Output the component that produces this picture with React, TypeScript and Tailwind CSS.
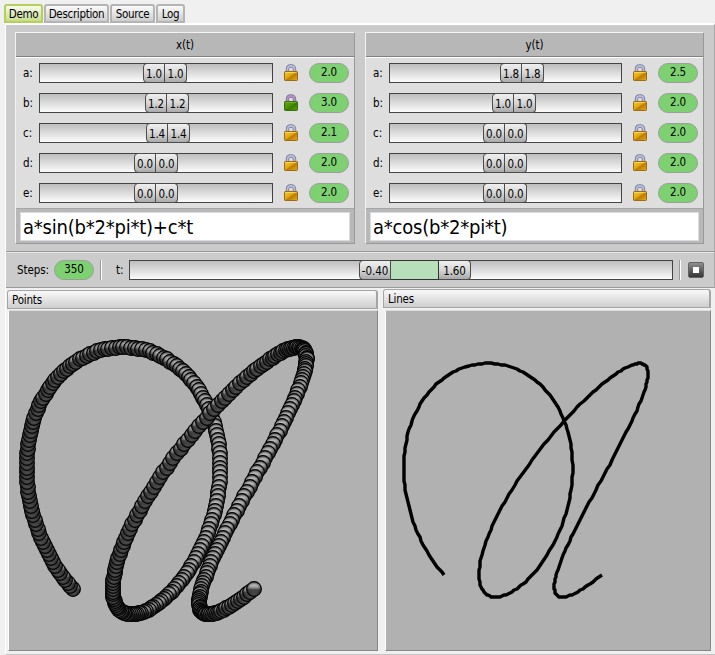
import React from "react";

type Row = { name: string; value: string; offset: number; power: string; open?: boolean };

const xRows: Row[] = [
  { name: "a:", value: "1.0", offset: 103, power: "2.0" },
  { name: "b:", value: "1.2", offset: 105, power: "3.0", open: true },
  { name: "c:", value: "1.4", offset: 106, power: "2.1" },
  { name: "d:", value: "0.0", offset: 94, power: "2.0" },
  { name: "e:", value: "0.0", offset: 94, power: "2.0" },
];

const yRows: Row[] = [
  { name: "a:", value: "1.8", offset: 110, power: "2.5" },
  { name: "b:", value: "1.0", offset: 102, power: "2.0" },
  { name: "c:", value: "0.0", offset: 93, power: "2.0" },
  { name: "d:", value: "0.0", offset: 93, power: "2.0" },
  { name: "e:", value: "0.0", offset: 93, power: "2.0" },
];

const STEPS = 350;

function curve(cx: number, cy: number, sx: number, sy: number) {
  return Array.from({ length: STEPS + 1 }, (_, i) => {
    const t = -0.4 + (2 * i) / STEPS;
    const x = Math.sin(1.2 * 2 * Math.PI * t) + 1.4 * t;
    const y = 1.8 * Math.cos(2 * Math.PI * t);
    return [cx + x * sx, cy - y * sy] as const;
  });
}

function Lock({ open }: { open?: boolean }) {
  const id = open ? "green" : "gold";
  return (
    <svg width="14" height="18" viewBox="0 0 14 18" className="block shrink-0">
      <defs>
        <linearGradient id={id} x1="0" y1="0" x2="1" y2="1">
          <stop offset="0" stopColor={open ? "#62a514" : "#f3cd3e"} />
          <stop offset="0.45" stopColor={open ? "#4a9206" : "#dfa70c"} />
          <stop offset="0.55" stopColor={open ? "#3a7b03" : "#bc7b05"} />
          <stop offset="1" stopColor={open ? "#58a30c" : "#eaae10"} />
        </linearGradient>
      </defs>
      <path d="M3.5 9V5C3.5 3 4.8 2 7 2s3.5 1 3.5 3V9" fill="none" stroke="#747491" strokeWidth="3.4" />
      <path d="M3.5 9V5C3.5 3 4.8 2 7 2s3.5 1 3.5 3V9" fill="none" stroke={open ? "#b590cf" : "#b9bdde"} strokeWidth="1.8" />
      <rect x="0.5" y="7.5" width="13" height="9" rx="0.7" fill={`url(#${id})`} stroke={open ? "#35700b" : "#9b6b18"} />
      <path d="M1.5 8.5h11" stroke={open ? "#80bd37" : "#ffe06e"} opacity=".7" />
    </svg>
  );
}

function Chip({ children }: { children: React.ReactNode }) {
  return (
    <div className="flex h-5 w-10 shrink-0 items-center justify-center rounded-full border border-[#9a9f9a] bg-[#7dd171] text-[11.5px] leading-none tracking-[-0.1px]">
      <span>{children}</span>
    </div>
  );
}

function Handle({ children, side, wide }: { children: React.ReactNode; side: "left" | "right"; wide?: boolean }) {
  return (
    <div
      className={`flex h-5 shrink-0 items-center justify-center border-[#4c4c4c] bg-linear-to-b from-[#efefef] via-[#d6d6d6] to-[#aaaaaa] text-[11.5px] leading-none tracking-[-0.1px] ${
        side === "left" ? "rounded-l-[4px] border" : "rounded-r-[4px] border border-l-0"
      } ${wide ? "w-[32px]" : "w-[22px]"}`}
    >
      <span className="translate-y-[2px]">{children}</span>
    </div>
  );
}

function Track({ children, className }: { children: React.ReactNode; className: string }) {
  return (
    <div className={`flex h-5 shrink-0 bg-linear-to-b from-[#bababa] to-white shadow-[inset_0_0_0_1px_#444] ${className}`}>
      {children}
    </div>
  );
}

function Column({ title, rows, formula, width, track }: { title: string; rows: Row[]; formula: string; width: string; track: string }) {
  return (
    <section className={`h-[212px] border border-t-[#f3f3f3] border-r-[#999] border-b-[#999] border-l-[#f3f3f3] bg-[#dedede] ${width}`}>
      <h2 className="flex h-6 items-center justify-center border-b border-[#808080] bg-[#b7b7b7] pt-[2px] text-[11.5px] leading-none">{title}</h2>
      <div className="h-[151px] border-t border-white pt-[5px]">
        {rows.map((row) => (
          <div key={row.name} className="flex h-[30px] items-start">
            <span className="w-[23px] shrink-0 pl-[7px] text-[11.5px] leading-[21px]">{row.name}</span>
            <Track className={track}>
              <div className="shrink-0" style={{ width: row.offset + 1 }} />
              <Handle side="left">{row.value}</Handle>
              <Handle side="right">{row.value}</Handle>
            </Track>
            <div className="ml-[11px] mt-px"><Lock open={row.open} /></div>
            <div className="ml-[11px]"><Chip>{row.power}</Chip></div>
          </div>
        ))}
      </div>
      <div className="h-[35px] border-t border-[#a6a6a6] bg-[#b8b8b8] pl-1 pr-1 pt-[3px]">
        <div className="flex h-[29px] items-center border border-[#d8dce0] bg-white pl-[2px] text-[20px] leading-none tracking-[-0.22px]">
          {formula}
        </div>
      </div>
    </section>
  );
}

function Tab({ children, className, active }: { children: string; className: string; active?: boolean }) {
  return (
    <div
      className={`flex h-[19px] items-center justify-center rounded-t-[3px] border-2 pt-[3px] text-[11.5px] leading-none tracking-[-0.3px] ${
        active
          ? "border-[#b5cf5b] bg-linear-to-b from-[#f7faed] to-[#c8dc8d]"
          : "border-[#b4b4b4] bg-linear-to-b from-[#fafafa] to-[#cecece]"
      } ${className}`}
    >
      {children}
    </div>
  );
}

function PlotHeader({ children, className }: { children: string; className: string }) {
  return (
    <h3 className={`flex items-center rounded-t-[3px] border border-[#a5a5a5] border-r-2 bg-linear-to-b from-[#f9f9f9] to-[#cecece] pl-1 pt-[3px] text-[11.5px] leading-none tracking-[-0.2px] ${className}`}>
      {children}
    </h3>
  );
}

export default function App() {
  const balls = curve(123.4, 480.8, 74, 74.2);
  const line = curve(488.2, 480.2, 64.5, 64.9);
  return (
    <main className="h-[655px] w-[715px] overflow-hidden bg-[#f0f0f0] font-['DejaVu_Sans_Condensed','DejaVu_Sans',sans-serif] text-black [font-stretch:condensed]">
      <nav className="flex h-[23px] pl-1 pt-1">
        <Tab active className="w-[39px]">Demo</Tab>
        <Tab className="ml-px w-[65px]">Description</Tab>
        <Tab className="ml-px w-[45px]">Source</Tab>
        <Tab className="ml-px w-[29px]">Log</Tab>
      </nav>
      <div className="ml-[5px] h-[632px] border-b border-l border-[#fff] border-b-[#c4c4c4]">
        <div className="h-[265px] border-t-2 border-r border-t-white border-r-[#aaa] bg-[#cbcbcb]">
          <div className="flex h-[226px] pl-[9px] pt-[7px]">
            <Column title="x(t)" rows={xRows} formula="a*sin(b*2*pi*t)+c*t" width="w-[340px]" track="w-[234px]" />
            <div className="w-[10px]" />
            <Column title="y(t)" rows={yRows} formula="a*cos(b*2*pi*t)" width="w-[339px]" track="w-[233px]" />
          </div>
          <div className="flex h-[37px] items-start border-t border-b border-[#999] pt-[8px] shadow-[inset_0_1px_#e5e5e5]">
            <span className="w-[48px] pl-[11px] text-[11.5px] leading-[21px] tracking-[-0.1px]">Steps:</span>
            <Chip>350</Chip>
            <div className="ml-[6px] h-5 w-[2px] border-l border-[#999] bg-white" />
            <span className="ml-[14px] w-[13px] text-[11.5px] leading-[21px]">t:</span>
            <Track className="w-[544px]">
              <div className="w-[230px]" />
              <Handle side="left" wide>-0.40</Handle>
              <div className="h-5 w-[48px] border-y border-r border-[#333] bg-[#b6dfba]" />
              <Handle side="right" wide>1.60</Handle>
            </Track>
            <div className="ml-[6px] h-5 w-[2px] border-l border-[#999] bg-white" />
            <div className="ml-[7px] mt-[2px] flex h-4 w-4 items-center justify-center rounded-[2px] border border-[#646464] bg-linear-to-b from-[#909090] to-[#353535]">
              <div className="h-[6px] w-[6px] bg-white" />
            </div>
          </div>
        </div>
        <div className="flex h-[363px] pt-[1px]">
          <div className="w-[373px]">
            <PlotHeader className="ml-px mt-[1px] h-[19px] w-[371px]">Points</PlotHeader>
            <div className="ml-[2px] mt-px h-[341px] w-[370px] border border-t-[#ddd] border-r-[#888] border-b-[#888] border-l-white bg-[#b1b1b1]">
              <svg width="368" height="339" viewBox="9 311 368 339" className="block">
                <defs>
                  <linearGradient id="ball" x1="0" y1="0" x2="0" y2="1">
                    <stop offset="0" stopColor="#8a8a8a" />
                    <stop offset="0.25" stopColor="#c0c0c0" />
                    <stop offset="0.42" stopColor="#909090" />
                    <stop offset="0.55" stopColor="#454545" />
                    <stop offset="0.75" stopColor="#444" />
                    <stop offset="1" stopColor="#747474" />
                  </linearGradient>
                  <radialGradient id="rim">
                    <stop offset="0" stopColor="#000" stopOpacity="0" />
                    <stop offset="0.6" stopColor="#000" stopOpacity="0.05" />
                    <stop offset="1" stopColor="#000" stopOpacity="0.5" />
                  </radialGradient>
                </defs>
                {balls.map(([x, y], i) => (
                  <g key={i} transform={`translate(${Math.round(x)} ${Math.round(y)})`}>
                    <circle r="7.4" fill="url(#ball)" />
                    <circle r="7.4" fill="url(#rim)" stroke="#000" strokeWidth="1.1" />
                  </g>
                ))}
              </svg>
            </div>
          </div>
          <div className="ml-1">
            <PlotHeader className="h-[19px] w-[328px]">Lines</PlotHeader>
            <div className="ml-[2px] mt-[2px] h-[341px] w-[326px] border border-t-[#ddd] border-r-[#888] border-b-[#888] border-l-white bg-[#b1b1b1]">
              <svg width="324" height="339" viewBox="386 311 324 339" className="block">
                <polyline
                  points={line.map(([x, y]) => `${Math.round(x)},${Math.round(y)}`).join(" ")}
                  fill="none"
                  stroke="#000"
                  strokeWidth="3.4"
                  strokeLinejoin="round"
                />
              </svg>
            </div>
          </div>
        </div>
      </div>
    </main>
  );
}
